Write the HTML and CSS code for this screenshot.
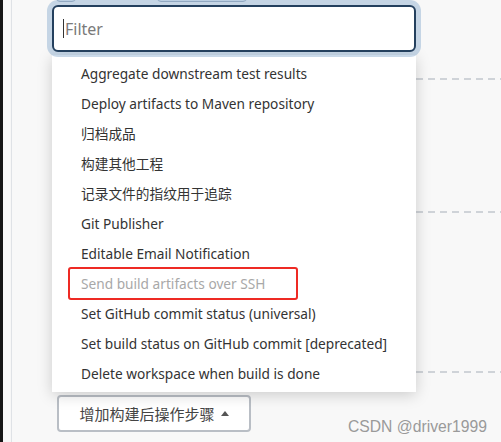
FILE: index.html
```html
<!DOCTYPE html>
<html lang="zh">
<head>
<meta charset="utf-8">
<link rel="stylesheet" href="styles.css">
</head>
<body>
<div class="frame">
  <div class="edge"></div>
  <div class="gutter"></div>
  <div class="panel">
    <div class="content">
      <div class="toolbar">
        <span class="tb-btn tb-a"></span>
        <span class="tb-btn tb-b"></span>
      </div>
      <div class="section s1"></div>
      <div class="section s2"></div>
      <div class="section s3"></div>
      <button class="add-btn">增加构建后操作步骤 <span class="caret"></span></button>
    </div>

    <div class="combo">
      <div class="filter"><span class="cursor"></span><span class="placeholder">Filter</span></div>
      <ul class="menu">
        <li>Aggregate downstream test results</li>
        <li>Deploy artifacts to Maven repository</li>
        <li>归档成品</li>
        <li>构建其他工程</li>
        <li>记录文件的指纹用于追踪</li>
        <li>Git Publisher</li>
        <li>Editable Email Notification</li>
        <li class="disabled">Send build artifacts over SSH</li>
        <li>Set GitHub commit status (universal)</li>
        <li>Set build status on GitHub commit [deprecated]</li>
        <li>Delete workspace when build is done</li>
      </ul>
      <div class="annot"></div>
    </div>
  </div>
</div>
<div class="watermark">CSDN @driver1999</div>
</body>
</html>
```

FILE: styles.css
```css
* { box-sizing: border-box; }
html, body { margin: 0; padding: 0; }
body {
  width: 501px;
  height: 442px;
  overflow: hidden;
  background: #f8f8f8;
  font-family: "Segoe UI", "Noto Sans", "Noto Sans CJK SC", sans-serif;
  color: #333;
  position: relative;
}
.frame { display: flex; height: 442px; }
.edge { width: 3px; background: #151515; }
.gutter { width: 8px; background: #f7f7f7; }
.panel {
  flex: 1;
  position: relative;
  border-left: 1px solid #dfe2e6;
  background: #f8f8f8;
}
.content {
  padding-left: 44px;
  display: flex;
  flex-direction: column;
}
.toolbar { height: 3px; position: relative; }
.tb-btn {
  position: absolute;
  top: -10px;
  height: 12px;
  border: 1px solid #a3b0bf;
  border-radius: 4px;
  background: #e9eef3;
}
.tb-a { left: 0; width: 20px; }
.tb-b { left: 101px; width: 90px; }
.section {
  height: 2px;
  background: repeating-linear-gradient(to right, #cfd3d8 0 7px, transparent 7px 12px);
}
.s1 { margin-top: 75px; }
.s2 { margin-top: 131px; }
.s3 { margin-top: 158px; }
.add-btn {
  align-self: flex-start;
  margin-top: 22px;
  margin-left: 1px;
  height: 37px;
  width: 194px;
  padding: 0;
  border: 2px solid #b9bec5;
  border-radius: 4px;
  background: #fff;
  font-family: "Noto Sans CJK SC", sans-serif;
  font-size: 15px;
  color: #444;
  display: flex;
  align-items: center;
  justify-content: center;
  gap: 6px;
}
.caret {
  width: 0; height: 0;
  border-left: 4px solid transparent;
  border-right: 4px solid transparent;
  border-bottom: 5px solid #555;
}
.combo {
  position: absolute;
  left: 40px;
  top: 5px;
  width: 364px;
}
.filter {
  height: 47px;
  border: 2px solid #24405e;
  border-radius: 6px;
  background: #fff;
  box-shadow: 0 0 0 5px rgba(120, 160, 200, 0.4);
  display: flex;
  align-items: center;
  padding-left: 9px;
  font-size: 16px;
  position: relative;
  z-index: 2;
}
.cursor { width: 1px; height: 19px; background: #333; margin-right: 1px; }
.placeholder { color: #7a7a7a; }
.menu {
  list-style: none;
  margin: 3px 0 0;
  padding: 4px 0 3px 29px;
  background: #fff;
  box-shadow: 0 3px 14px rgba(0, 0, 0, 0.18);
  font-size: 13.7px;
}
.menu li {
  height: 30px;
  line-height: 30px;
  white-space: nowrap;
}
.menu li.disabled { color: #a8a8a8; }
.annot {
  position: absolute;
  left: 16px;
  top: 262px;
  width: 230px;
  height: 33px;
  border: 2px solid #ee2a24;
  border-radius: 3px;
}
.watermark {
  position: absolute;
  left: 348px;
  top: 418px;
  font-family: "Liberation Sans", sans-serif;
  font-size: 15.7px;
  color: #9a9a9a;
}
```
